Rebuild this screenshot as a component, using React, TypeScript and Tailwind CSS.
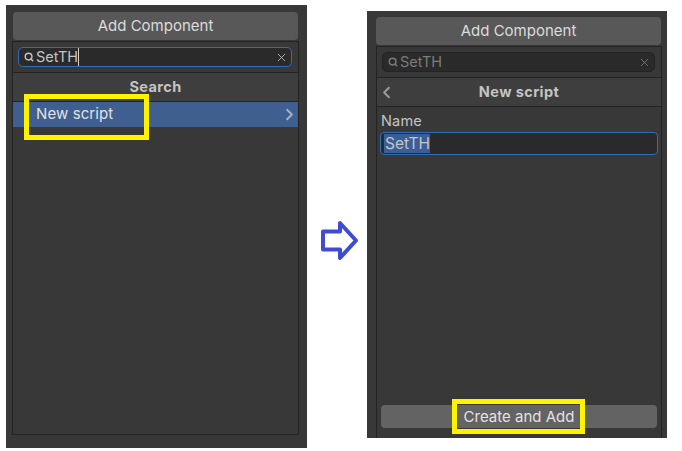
import { X, Search, ChevronRight, ChevronLeft } from "lucide-react";

function SearchBox({ active }: { active?: boolean }) {
  return (
    <div className="flex h-[31px] items-center border-b border-[#232323] pl-[5px] pr-[6px]">
      <div
        className={`flex h-[20px] w-full items-center rounded-[5px] border bg-[#2a2a2a] pl-[5px] pr-[3px] ${
          active ? "border-[#2f6fb5]" : "border-[#232323]"
        }`}
      >
        <Search
          size={10}
          strokeWidth={3.5}
          className={active ? "text-[#c4c4c4]" : "text-[#7c7c7c]"}
        />
        <span
          className={`ml-[2px] text-[14.5px] leading-[18px] ${
            active ? "border-r border-[#d2d2d2] text-[#c4c4c4]" : "text-[#7c7c7c]"
          }`}
        >
          SetTH
        </span>
        <X
          size={13}
          strokeWidth={1.5}
          className={`ml-auto ${active ? "text-[#c4c4c4]" : "text-[#7c7c7c]"}`}
        />
      </div>
    </div>
  );
}

function AddButton({ className = "" }: { className?: string }) {
  return (
    <div
      className={`flex h-[28px] items-center justify-center rounded-[4px] bg-[#585858] pt-[1px] text-[15px] text-[#dcdcdc] ${className}`}
    >
      Add Component
    </div>
  );
}

export default function App() {
  return (
    <div className="relative flex h-[451px] w-[682px] bg-white font-['Inter',sans-serif]">
      {/* Left panel */}
      <div className="ml-[6px] mt-[5px] flex h-[443px] w-[301px] flex-col bg-[#383838] pl-[7px] pr-[9px] pt-[7px]">
        <AddButton />
        <div className="mt-[1px] flex h-[394px] flex-col border border-[#232323] -mx-[1px]">
          <SearchBox active />
          <div className="flex h-[29px] items-center justify-center border-b border-[#232323] bg-[#3e3e3e] text-[14.5px] font-bold tracking-[0.4px] text-[#c4c4c4]">
            Search
          </div>
          <div className="flex h-[25px] items-center justify-between bg-[#3e5f8f] pl-[23px] text-[15px] tracking-[0.1px] text-[#e2e2e2]">
            New script
            <ChevronRight size={19} strokeWidth={2.5} className="-mr-[1px] text-[#9fb0c9]" />
          </div>
        </div>
      </div>

      {/* Arrow */}
      <div className="ml-[13px] mt-[220px] h-[41px] w-[39px]">
        <svg viewBox="0 0 39 41" width="39" height="41">
          <path
            d="M3 11.5 H20 V3 L36 20.5 L20 38 V29.5 H3 Z"
            fill="white"
            stroke="#3f4bd0"
            strokeWidth="4"
            strokeLinejoin="round"
          />
        </svg>
      </div>

      {/* Right panel */}
      <div className="ml-[8px] mt-[11px] flex h-[427px] w-[300px] flex-col bg-[#383838] pl-[9px] pr-[5px] pt-[6px]">
        <AddButton className="mr-[1px]" />
        <div className="mt-[1px] flex h-[392px] flex-col border-x border-t border-[#232323]">
          <SearchBox />
          <div className="relative flex h-[29px] items-center justify-center border-b border-[#232323] bg-[#3e3e3e] text-[14.5px] font-bold tracking-[0.4px] text-[#c4c4c4]">
            <ChevronLeft size={19} strokeWidth={2.5} className="absolute left-[0px] text-[#9a9a9a]" />
            New script
          </div>
          <div className="flex flex-1 flex-col px-[4px] pt-[4px]">
            <div className="text-[14.5px] leading-[20px] tracking-[0.2px] text-[#c4c4c4]">Name</div>
            <div className="-mx-[1px] mt-[1px] flex h-[23px] items-center rounded-[4px] border border-[#2f6fb5] bg-[#2a2a2a] pl-[3px]">
              <span className="bg-[#3a5f98] pl-[1px] text-[15.5px] leading-[19px] text-[#c4c4c4]">SetTH</span>
            </div>
            <div className="mt-auto mb-[10px] flex h-[23px] items-center justify-center rounded-[4px] bg-[#636363] pt-[1px] text-[15px] text-[#e2e2e2]">
              Create and Add
            </div>
          </div>
        </div>
      </div>

      {/* Yellow callouts */}
      <div className="absolute left-[24px] top-[94px] h-[46px] w-[125px] border-[5px] border-[#fff200]" />
      <div className="absolute left-[452px] top-[399px] h-[35px] w-[133px] border-[5px] border-[#fff200]" />
    </div>
  );
}
